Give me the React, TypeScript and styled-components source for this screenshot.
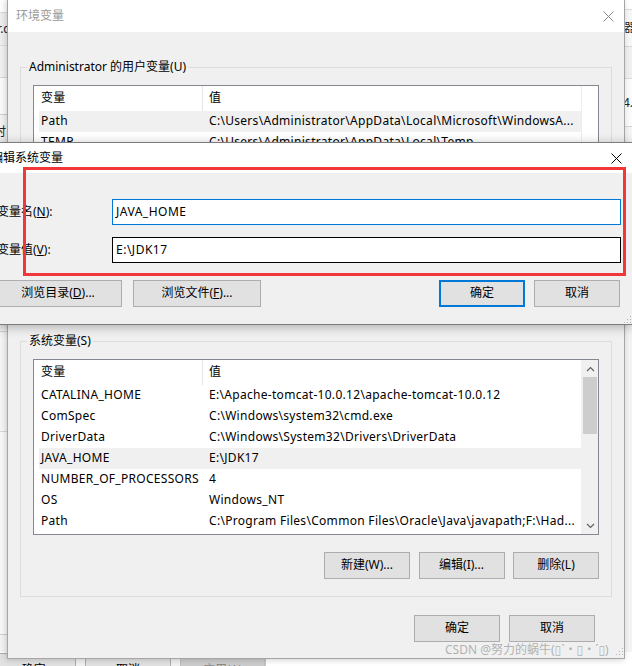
import React from 'react';
import styled, { createGlobalStyle } from 'styled-components';

const GlobalStyle = createGlobalStyle`
  html, body { margin: 0; padding: 0; background: #ffffff; }
  body {
    font-family: "Noto Sans", "Noto Sans CJK SC", sans-serif;
    font-size: 12px;
    color: #000;
  }
  * { box-sizing: border-box; }
`;

const FONT = `"Noto Sans", "Noto Sans CJK SC", sans-serif`;

/* ---------- desktop & background windows ---------- */

const Desktop = styled.div`
  position: relative;
  width: 632px;
  height: 666px;
  overflow: hidden;
  background: #f3f3f3;
  font-family: ${FONT};
`;

const SideStrip = styled.div<{ $side: 'left' | 'right' }>`
  position: absolute;
  top: 0;
  ${(p) => (p.$side === 'left' ? 'left: 0;' : 'right: 0;')}
  width: 9px;
  height: 666px;
  display: flex;
  flex-direction: column;
  overflow: hidden;
`;

const Band = styled.div<{ $h: number; $bg: string; $line?: string; $valign?: string }>`
  height: ${(p) => p.$h}px;
  flex: none;
  background: ${(p) => p.$bg};
  border-bottom: 1px solid ${(p) => p.$line || 'transparent'};
  display: flex;
  align-items: ${(p) => p.$valign || 'center'};
  white-space: nowrap;
  font-size: 12px;
  line-height: 16px;
  color: #222;
  overflow: hidden;
`;

const Clip = styled.span<{ $shift: number }>`
  margin-left: ${(p) => p.$shift}px;
`;

const BackBottom = styled.div`
  position: absolute;
  left: 0;
  top: 652px;
  width: 632px;
  height: 30px;
  display: flex;
  align-items: flex-start;
  padding-top: 1px;
  background: #ffffff;
`;

const BackButtonsArea = styled.div`
  width: 275px;
  height: 100%;
  display: flex;
  gap: 9px;
  margin-left: -9px;
  background: #f0f0f0;
  border-right: 1px solid #c8c8c8;
`;

const BackButton = styled.div<{ $disabled?: boolean }>`
  width: 86px;
  height: 27px;
  display: flex;
  align-items: center;
  justify-content: center;
  border: 1px solid ${(p) => (p.$disabled ? '#bfbfbf' : '#adadad')};
  background: ${(p) => (p.$disabled ? '#cccccc' : '#e1e1e1')};
  color: ${(p) => (p.$disabled ? '#8a8a8a' : '#000')};
  font-size: 12px;
  padding-top: 4px;
`;

/* ---------- generic window chrome ---------- */

const EnvWindow = styled.div`
  position: absolute;
  left: 7px;
  top: -1px;
  width: 618px;
  height: 660px;
  border: 1px solid #a6a6a6;
  box-shadow: -1px 1px 6px rgba(0, 0, 0, 0.18);
  display: flex;
  flex-direction: column;
  background: #f0f0f0;
`;

const TitleBar = styled.div<{ $h: number; $pl: number }>`
  height: ${(p) => p.$h}px;
  flex: none;
  background: #ffffff;
  display: flex;
  align-items: center;
  justify-content: space-between;
  padding-left: ${(p) => p.$pl}px;
`;

const TitleText = styled.span<{ $inactive?: boolean }>`
  font-size: 12px;
  line-height: 16px;
  color: ${(p) => (p.$inactive ? '#9a9a9a' : '#000')};
  white-space: nowrap;
`;

const CloseBtn = styled.div`
  width: 32px;
  height: 100%;
  display: flex;
  align-items: center;
  justify-content: center;
`;

const CloseIcon = ({ color }: { color: string }) => (
  <svg width="11" height="11" viewBox="0 0 11 11">
    <path d="M0.5 0.5 L10.5 10.5 M10.5 0.5 L0.5 10.5" stroke={color} strokeWidth="1" fill="none" />
  </svg>
);

const EnvBody = styled.div`
  flex: 1;
  position: relative;
  padding: 26px 12px 0 12px;
  display: flex;
  flex-direction: column;
`;

/* ---------- group boxes ---------- */

const Group = styled.fieldset<{ $mt: number }>`
  margin: ${(p) => p.$mt}px 0 0 0;
  border: 1px solid #dcdcdc;
  padding: 9px 12px 17px 12px;
  min-width: 0;
`;

const Legend = styled.legend`
  font-size: 12px;
  line-height: 18px;
  padding: 0 2px;
  margin-left: -6px;
  white-space: nowrap;
`;

const ListBox = styled.div`
  height: 176px;
  border: 1px solid #828790;
  background: #ffffff;
  display: flex;
  overflow: hidden;
`;

const ListContent = styled.div`
  flex: 1;
  padding-left: 5px;
  display: flex;
  flex-direction: column;
  min-width: 0;
`;

const ListRow = styled.div<{ $header?: boolean; $hl?: boolean }>`
  height: ${(p) => (p.$header ? 25 : 21)}px;
  flex: none;
  display: grid;
  grid-template-columns: 164px 1fr;
  align-items: center;
  background: ${(p) => (p.$hl ? '#f0f0f0' : 'transparent')};
  white-space: nowrap;
  font-size: 12px;
  line-height: 16px;
  letter-spacing: 0.3px;
`;

const Cell = styled.div<{ $divider?: boolean; $first?: boolean }>`
  height: 100%;
  display: flex;
  align-items: center;
  padding-left: ${(p) => (p.$first ? 2 : 6)}px;
  padding-bottom: 2px;
  border-right: 1px solid ${(p) => (p.$divider ? '#e5e5e5' : 'transparent')};
  overflow: hidden;
`;

const ScrollTrack = styled.div<{ $blank?: boolean }>`
  width: 17px;
  flex: none;
  background: ${(p) => (p.$blank ? '#ffffff' : '#f0f0f0')};
  display: flex;
  flex-direction: column;
  border-left: 1px solid ${(p) => (p.$blank ? '#ededed' : 'transparent')};
`;

const ScrollArrow = styled.div`
  height: 17px;
  flex: none;
  display: flex;
  align-items: center;
  justify-content: center;
`;

const ScrollThumb = styled.div`
  height: 57px;
  flex: none;
  margin: 0 1px;
  background: #cdcdcd;
`;

const ScrollSpace = styled.div`
  flex: 1;
`;

const Chevron = ({ up }: { up?: boolean }) => (
  <svg width="9" height="6" viewBox="0 0 9 6">
    <path
      d={up ? 'M1 5 L4.5 1.5 L8 5' : 'M1 1 L4.5 4.5 L8 1'}
      stroke="#606060"
      strokeWidth="1.2"
      fill="none"
    />
  </svg>
);

const ButtonRow = styled.div<{ $mt: number; $pr?: number; $between?: boolean }>`
  margin-top: ${(p) => p.$mt}px;
  padding-right: ${(p) => p.$pr || 0}px;
  display: flex;
  justify-content: ${(p) => (p.$between ? 'space-between' : 'flex-end')};
  gap: 9px;
`;

const ButtonGroup = styled.div<{ $gap: number }>`
  display: flex;
  gap: ${(p) => p.$gap}px;
`;

const WinButton = styled.div<{ $w?: number; $default?: boolean }>`
  width: ${(p) => p.$w || 86}px;
  height: 27px;
  flex: none;
  display: flex;
  align-items: center;
  justify-content: center;
  padding-bottom: 1px;
  background: #e1e1e1;
  border: ${(p) => (p.$default ? '2px solid #0078d7' : '1px solid #adadad')};
  font-size: 12px;
  line-height: 16px;
  white-space: nowrap;
`;

/* ---------- edit dialog ---------- */

const EditDialog = styled.div`
  position: absolute;
  left: -17px;
  top: 142px;
  width: 650px;
  height: 183px;
  border: 1px solid #7c7c7c;
  box-shadow: 0 2px 10px rgba(0, 0, 0, 0.28);
  display: flex;
  flex-direction: column;
  background: #f0f0f0;
`;

const EditBody = styled.div`
  flex: 1;
  position: relative;
  padding: 26px 11px 0 10px;
  display: flex;
  flex-direction: column;
`;

const FieldGrid = styled.div`
  display: grid;
  grid-template-columns: 118px 1fr;
  row-gap: 12px;
  align-items: center;
`;

const FieldLabel = styled.label`
  padding-left: 3px;
  padding-bottom: 1px;
  font-size: 12px;
  line-height: 16px;
  white-space: nowrap;
`;

const TextBox = styled.div<{ $focus?: boolean }>`
  height: 26px;
  border: 1px solid ${(p) => (p.$focus ? '#0078d7' : '#000')};
  background: #ffffff;
  display: flex;
  align-items: center;
  padding-left: 3px;
  padding-bottom: 1px;
  font-size: 12px;
  line-height: 16px;
  letter-spacing: 0.5px;
`;

const Grip = styled.div<{ $r: number; $b: number }>`
  position: absolute;
  right: ${(p) => p.$r}px;
  bottom: ${(p) => p.$b}px;
  width: 8px;
  height: 8px;
  background-image: radial-gradient(circle, #b4b4b4 0.9px, transparent 1px);
  background-size: 3px 3px;
  clip-path: polygon(100% 0, 100% 100%, 0 100%);
`;

/* ---------- overlays ---------- */

const Highlight = styled.div`
  position: absolute;
  left: 23px;
  top: 167px;
  width: 603px;
  height: 109px;
  border: 3px solid #f2373a;
  pointer-events: none;
`;

const Watermark = styled.div`
  position: absolute;
  left: 445px;
  top: 641px;
  font-family: "Noto Sans", "DejaVu Sans", "Noto Sans CJK SC", sans-serif;
  font-size: 12px;
  line-height: 18px;
  color: rgba(120, 120, 120, 0.55);
  white-space: nowrap;
`;

/* ---------- data ---------- */

type Row = { name: string; value: string; hl?: boolean };

const userVars: Row[] = [
  { name: 'Path', value: 'C:\\Users\\Administrator\\AppData\\Local\\Microsoft\\WindowsA...', hl: true },
  { name: 'TEMP', value: 'C:\\Users\\Administrator\\AppData\\Local\\Temp' },
  { name: 'TMP', value: 'C:\\Users\\Administrator\\AppData\\Local\\Temp' },
];

const sysVars: Row[] = [
  { name: 'CATALINA_HOME', value: 'E:\\Apache-tomcat-10.0.12\\apache-tomcat-10.0.12' },
  { name: 'ComSpec', value: 'C:\\Windows\\system32\\cmd.exe' },
  { name: 'DriverData', value: 'C:\\Windows\\System32\\Drivers\\DriverData' },
  { name: 'JAVA_HOME', value: 'E:\\JDK17', hl: true },
  { name: 'NUMBER_OF_PROCESSORS', value: '4' },
  { name: 'OS', value: 'Windows_NT' },
  { name: 'Path', value: 'C:\\Program Files\\Common Files\\Oracle\\Java\\javapath;F:\\Had...' },
];

const VarList = ({ rows, scroll }: { rows: Row[]; scroll?: boolean }) => (
  <ListBox>
    <ListContent>
      <ListRow $header>
        <Cell $first $divider>变量</Cell>
        <Cell>值</Cell>
      </ListRow>
      {rows.map((r, i) => (
        <ListRow key={i} $hl={r.hl}>
          <Cell $first>{r.name}</Cell>
          <Cell>{r.value}</Cell>
        </ListRow>
      ))}
    </ListContent>
    {scroll ? (
      <ScrollTrack>
        <ScrollArrow>
          <Chevron up />
        </ScrollArrow>
        <ScrollThumb />
        <ScrollSpace />
        <ScrollArrow>
          <Chevron />
        </ScrollArrow>
      </ScrollTrack>
    ) : (
      <ScrollTrack $blank />
    )}
  </ListBox>
);

export default function App() {
  return (
    <>
      <GlobalStyle />
      <Desktop>
        <SideStrip $side="left">
          <Band $h={13} $bg="#fdfdfd" $line="#d9d9d9" />
          <Band $h={33} $bg="#eeeeee" $line="#dcdcdc">
            <Clip $shift={-14}>ter.c</Clip>
          </Band>
          <Band $h={32} $bg="#f0f0f0" $line="#d6d6d6" />
          <Band $h={37} $bg="#fafafa" $line="#d0d0d0" />
          <Band $h={26} $bg="#f2f2f2" $valign="flex-end">
            <Clip $shift={-6}>时</Clip>
          </Band>
          <Band $h={191} $bg="#f7f7f7" $line="#d6d6d6" />
          <Band $h={100} $bg="#f5f5f5" $line="#d6d6d6" />
          <Band $h={203} $bg="#f8f8f8" $line="#cfcfcf" />
        </SideStrip>
        <SideStrip $side="right">
          <Band $h={10} $bg="#ffffff" $line="#dcdcdc" />
          <Band $h={37} $bg="#f7f7f7" $line="#d8d8d8">
            <Clip $shift={1}>器</Clip>
          </Band>
          <Band $h={32} $bg="#f0f0f0" $line="#dadada" />
          <Band $h={48} $bg="#fbfbfb" $line="#d5d5d5">
            <Clip $shift={0}>4.</Clip>
          </Band>
          <Band $h={20} $bg="#f4f4f4" $line="#d5d5d5" />
          <Band $h={518} $bg="#f3f3f3" />
        </SideStrip>
        <BackBottom>
          <BackButtonsArea>
            <BackButton>确定</BackButton>
            <BackButton>取消</BackButton>
            <BackButton $disabled>应用(A)</BackButton>
          </BackButtonsArea>
        </BackBottom>

        <EnvWindow>
          <TitleBar $h={32} $pl={8}>
            <TitleText $inactive>环境变量</TitleText>
            <CloseBtn>
              <CloseIcon color="#8a8a8a" />
            </CloseBtn>
          </TitleBar>
          <EnvBody>
            <Group $mt={0}>
              <Legend>Administrator 的用户变量(U)</Legend>
              <VarList rows={userVars} />
              <ButtonRow $mt={17}>
                <ButtonGroup $gap={9}>
                  <WinButton>新建(N)...</WinButton>
                  <WinButton>编辑(E)...</WinButton>
                  <WinButton>删除(D)</WinButton>
                </ButtonGroup>
              </ButtonRow>
            </Group>
            <Group $mt={9}>
              <Legend>系统变量(S)</Legend>
              <VarList rows={sysVars} scroll />
              <ButtonRow $mt={17}>
                <ButtonGroup $gap={8.5}>
                  <WinButton>新建(W)...</WinButton>
                  <WinButton>编辑(I)...</WinButton>
                  <WinButton>删除(L)</WinButton>
                </ButtonGroup>
              </ButtonRow>
            </Group>
            <ButtonRow $mt={18} $pr={17}>
              <WinButton>确定</WinButton>
              <WinButton>取消</WinButton>
            </ButtonRow>
            <Grip $r={1} $b={3} />
          </EnvBody>
        </EnvWindow>

        <EditDialog>
          <TitleBar $h={30} $pl={7}>
            <TitleText>编辑系统变量</TitleText>
            <CloseBtn>
              <CloseIcon color="#000" />
            </CloseBtn>
          </TitleBar>
          <EditBody>
            <FieldGrid>
              <FieldLabel>
                变量名(<u>N</u>):
              </FieldLabel>
              <TextBox $focus>JAVA_HOME</TextBox>
              <FieldLabel>
                变量值(<u>V</u>):
              </FieldLabel>
              <TextBox>E:\JDK17</TextBox>
            </FieldGrid>
            <ButtonRow $mt={17} $pr={1} $between>
              <ButtonGroup $gap={11}>
                <WinButton $w={128}>
                  浏览目录(<u>D</u>)...
                </WinButton>
                <WinButton $w={128}>
                  浏览文件(<u>F</u>)...
                </WinButton>
              </ButtonGroup>
              <ButtonGroup $gap={9}>
                <WinButton $default>确定</WinButton>
                <WinButton>取消</WinButton>
              </ButtonGroup>
            </ButtonRow>
            <Grip $r={1} $b={1} />
          </EditBody>
        </EditDialog>

        <Highlight />
        <Watermark>CSDN @努力的蜗牛(▯`・▯・´▯)</Watermark>
      </Desktop>
    </>
  );
}
